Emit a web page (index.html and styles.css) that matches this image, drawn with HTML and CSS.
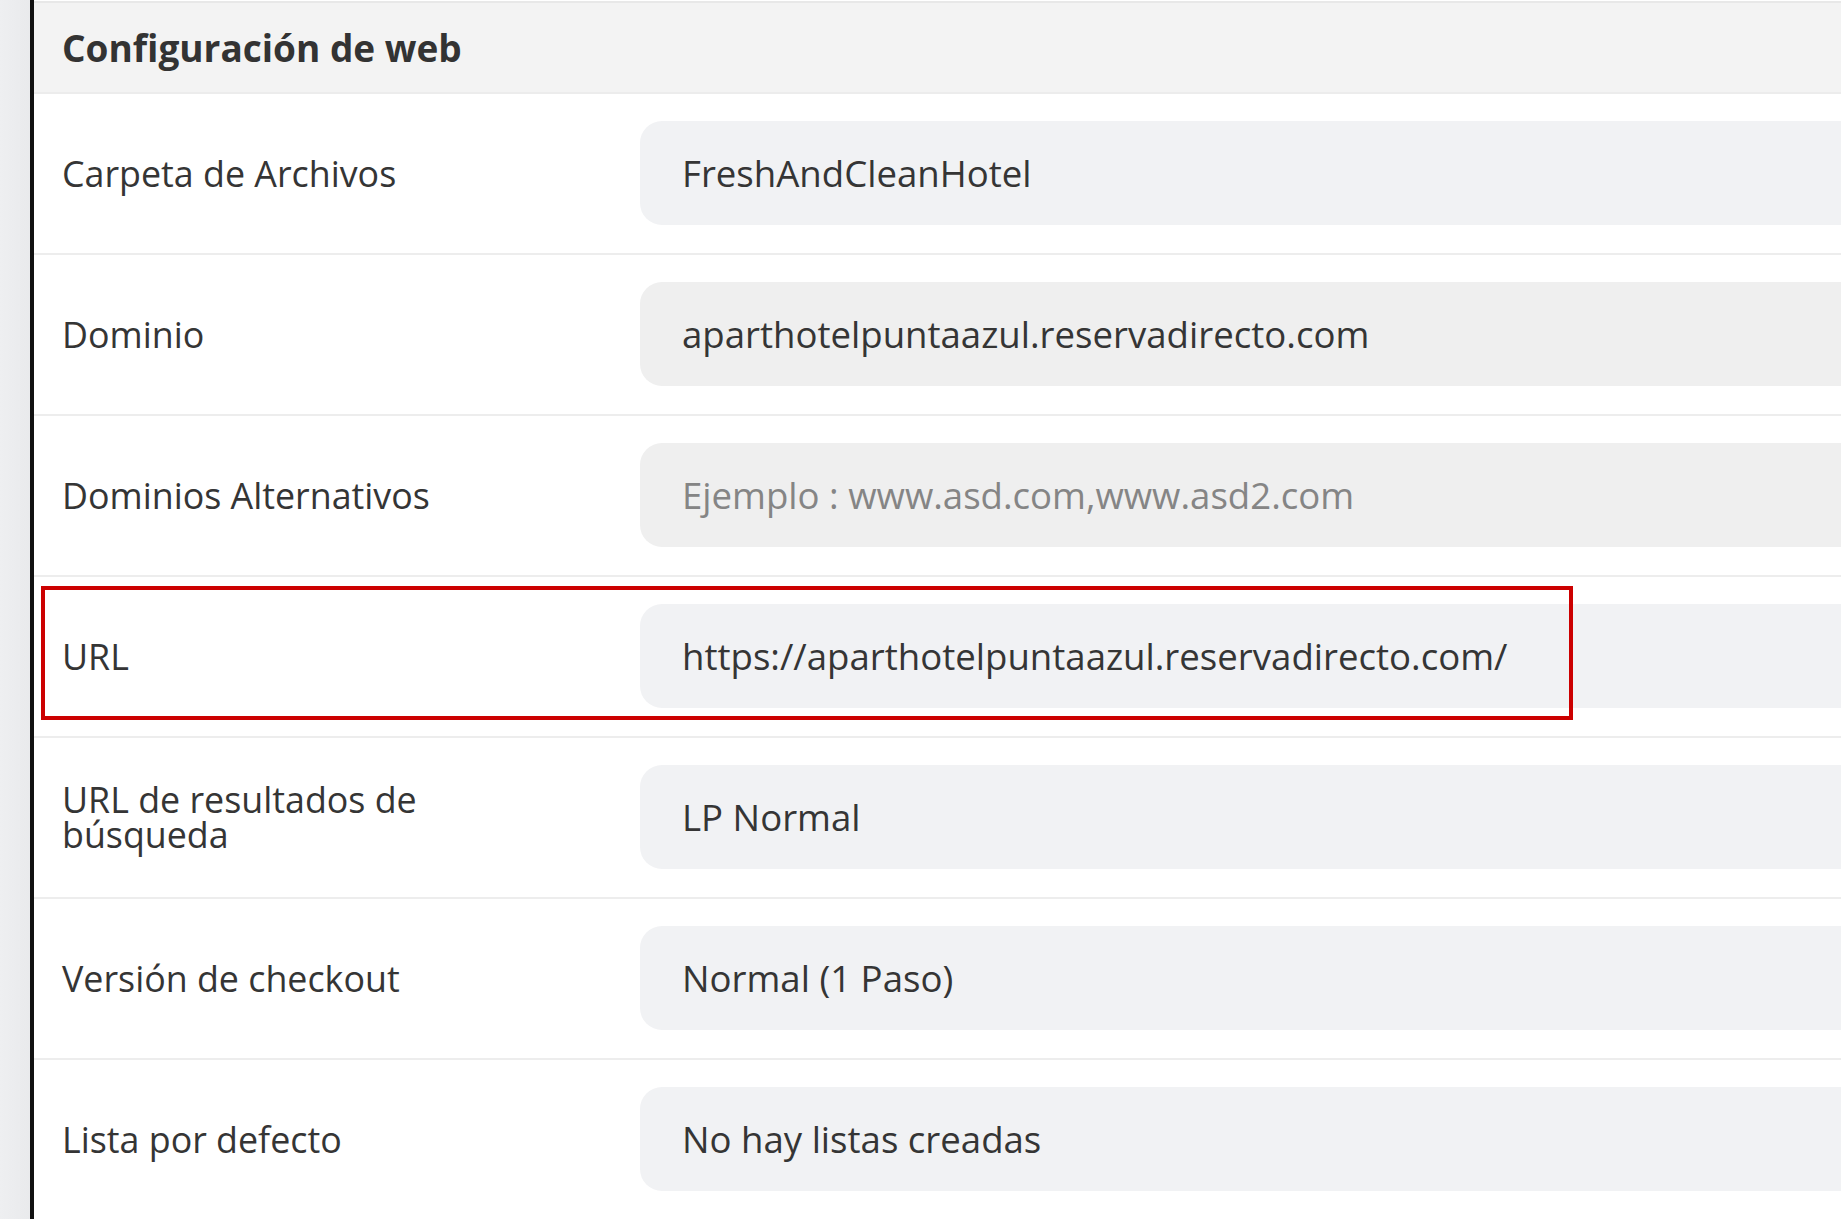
FILE: index.html
```html
<!DOCTYPE html>
<html lang="es">
<head>
<meta charset="utf-8">
<title>Configuración de web</title>
<link rel="stylesheet" href="styles.css">
</head>
<body>
<div class="page">
  <div class="gutter"></div>
  <main class="panel">
    <header class="panel-header">
      <h2 class="panel-title">Configuración de web</h2>
    </header>
    <div class="row">
      <label class="row-label">Carpeta de Archivos</label>
      <div class="field field-a">FreshAndCleanHotel</div>
    </div>
    <div class="row">
      <label class="row-label">Dominio</label>
      <div class="field field-b">aparthotelpuntaazul.reservadirecto.com</div>
    </div>
    <div class="row">
      <label class="row-label">Dominios Alternativos</label>
      <div class="field field-b placeholder">Ejemplo : www.asd.com,www.asd2.com</div>
    </div>
    <div class="row row-highlight">
      <label class="row-label">URL</label>
      <div class="field field-a">https://aparthotelpuntaazul.reservadirecto.com/</div>
      <div class="highlight-box"></div>
    </div>
    <div class="row">
      <label class="row-label">URL de resultados de búsqueda</label>
      <div class="field field-a">LP Normal</div>
    </div>
    <div class="row">
      <label class="row-label">Versión de checkout</label>
      <div class="field field-a">Normal (1 Paso)</div>
    </div>
    <div class="row">
      <label class="row-label">Lista por defecto</label>
      <div class="field field-a">No hay listas creadas</div>
    </div>
  </main>
</div>
</body>
</html>
```

FILE: styles.css
```css
html, body {
  margin: 0;
  padding: 0;
  background: #ffffff;
  overflow: hidden;
}

body {
  font-family: "Open Sans", "Liberation Sans", sans-serif;
  color: #353535;
}

.page {
  display: flex;
  width: 1900px;
  min-height: 1219px;
}

.gutter {
  width: 30px;
  flex: none;
  background: linear-gradient(to right, #eeeff1, #e9eaec);
}

.panel {
  flex: 1;
  border-left: 4px solid #111111;
  display: flex;
  flex-direction: column;
}

.panel-header {
  height: 89px;
  margin-top: 1px;
  background: #f3f3f3;
  border-top: 2px solid #e8e8e8;
  border-bottom: 2px solid #ececec;
  display: flex;
  align-items: center;
  padding-left: 28px;
}

.panel-title {
  margin: 0;
  font-size: 37px;
  font-weight: 700;
  color: #333333;
  letter-spacing: 0;
  padding-bottom: 0;
}

.row {
  position: relative;
  display: flex;
  align-items: center;
  padding: 27px 0 28px 28px;
  border-bottom: 2px solid #ededed;
}

.row-label {
  width: 578px;
  flex: none;
  font-size: 35.8px;
  line-height: 35px;
  color: #353535;
  padding-right: 100px;
  box-sizing: border-box;
}

.field {
  flex: 1;
  height: 104px;
  border-radius: 22px;
  display: flex;
  align-items: center;
  padding-left: 42px;
  font-size: 36.6px;
  color: #353535;
}

.field-a {
  background: #f1f2f4;
}

.field-b {
  background: #efefef;
}

.placeholder {
  color: #858585;
}

.highlight-box {
  position: absolute;
  top: 9px;
  left: 7px;
  width: 1532px;
  height: 134px;
  box-sizing: border-box;
  border: 4px solid #cc0000;
  pointer-events: none;
}
```
